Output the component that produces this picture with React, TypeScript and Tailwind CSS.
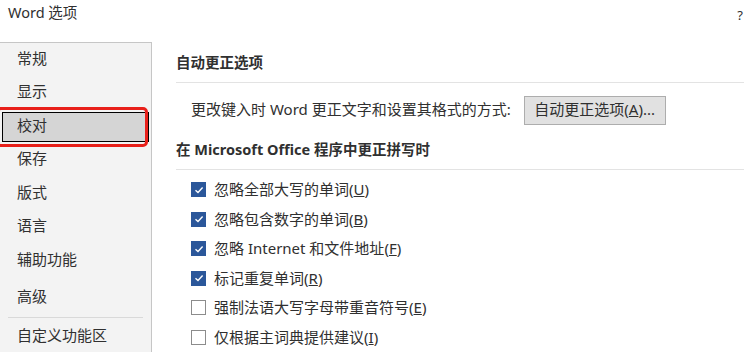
import React from "react";

const FONT = { fontFamily: '"Noto Sans", "Noto Sans CJK SC", sans-serif' };

const navItems = ["常规", "显示", "校对", "保存", "版式", "语言", "辅助功能"];

const checks: { label: string; key: string; checked: boolean }[] = [
  { label: "忽略全部大写的单词", key: "U", checked: true },
  { label: "忽略包含数字的单词", key: "B", checked: true },
  { label: "忽略 Internet 和文件地址", key: "F", checked: true },
  { label: "标记重复单词", key: "R", checked: true },
  { label: "强制法语大写字母带重音符号", key: "E", checked: false },
  { label: "仅根据主词典提供建议", key: "I", checked: false },
];

function CheckBox({ checked }: { checked: boolean }) {
  if (checked) {
    return (
      <span className="w-[15px] h-[15px] bg-[#2b579a] flex items-center justify-center shrink-0">
        <svg width="10" height="10" viewBox="0 0 10 10" fill="none">
          <path d="M1.5 5.2 L4 7.5 L8.6 2.6" stroke="#fff" strokeWidth="1.4" />
        </svg>
      </span>
    );
  }
  return <span className="w-[15px] h-[15px] border border-[#8c8c8c] bg-white shrink-0" />;
}

export default function App() {
  return (
    <div className="relative w-[744px] h-[352px] overflow-hidden bg-white text-[#303030]" style={FONT}>
      <div className="h-[42px] flex items-start justify-between pl-[8px] pr-[1px] pt-[2px]">
        <span className="text-[14.5px]">Word 选项</span>
        <span className="text-[13px] mt-[4px]">?</span>
      </div>

      <div className="flex">
        <div className="w-[152px] shrink-0 h-[320px] bg-[#f3f3f3] border-t border-r border-[#c6c6c6] text-[15px]">
          {navItems.map((item) =>
            item === "校对" ? (
              <div key={item} className="h-[33.5px] px-[2px] pt-[1.5px]">
                <div className="h-[30px] bg-[#d5d5d5] border border-black flex items-center pl-[14px] pb-[3px]">
                  {item}
                </div>
              </div>
            ) : (
              <div key={item} className="h-[33.5px] flex items-center pl-[17px] pb-[4px]">
                {item}
              </div>
            )
          )}
          <div className="h-[34px] mt-[4px] flex items-center pl-[17px] pb-[4px]">高级</div>
          <div className="mx-[8px] mt-[1px] border-t border-[#d9d9d9]" />
          <div className="h-[38px] flex items-center pl-[17px] pb-[2px]">自定义功能区</div>
        </div>

        <div className="flex-1 pl-[24px] text-[15px]">
          <div className="h-[40px] flex items-center pt-[1px] font-bold text-[14.5px]">自动更正选项</div>
          <div className="border-t border-[#e3e3e3]" />
          <div className="h-[42px] flex items-center pl-[15px] mt-[6px]">
            <span className="pb-[2px]">更改键入时 Word 更正文字和设置其格式的方式:</span>
            <button className="ml-[13px] h-[29px] w-[142px] bg-[#e1e1e1] border border-[#adadad] text-[15px] pb-[2px]">
              自动更正选项(<span className="underline">A</span>)...
            </button>
          </div>
          <div className="h-[38px] flex items-center font-bold text-[14.5px] pb-[1px]">在 Microsoft Office 程序中更正拼写时</div>
          <div className="border-t border-[#e3e3e3]" />
          <div className="pl-[15px] pt-[5px] flex flex-col">
            {checks.map((c) => (
              <div key={c.label} className="h-[29.5px] flex items-center gap-[8px]">
                <CheckBox checked={c.checked} />
                <span className="pb-[1px]">
                  {c.label}(<span className="underline">{c.key}</span>)
                </span>
              </div>
            ))}
          </div>
        </div>
      </div>

      <div className="absolute left-[-4px] top-[107px] w-[152px] h-[40px] border-[3px] border-[#e8201a] rounded-[5px]" />
    </div>
  );
}
